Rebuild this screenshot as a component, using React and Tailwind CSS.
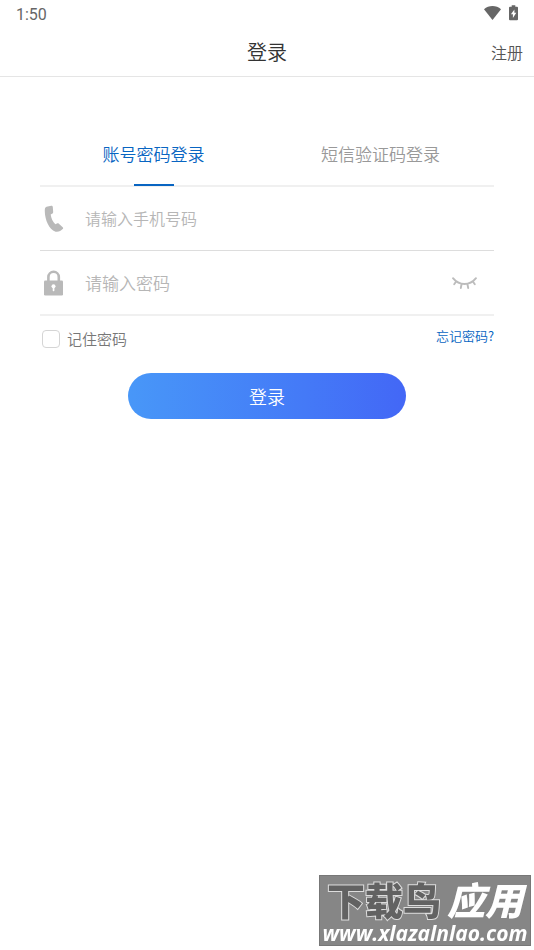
import React, { useState } from "react";

function StatusBar() {
  return (
    <div className="flex h-7 items-center justify-between px-4 text-[#666666]">
      <span className="pt-0.5 font-['Roboto',sans-serif] text-base font-normal">1:50</span>
      <div className="flex items-center gap-2 pb-0.5">
        <svg className="h-4 w-[17px]" viewBox="0 0 17 16" fill="currentColor" aria-hidden="true">
          <path d="M0 4.2C2.4 2.2 5.3 1.1 8.5 1.1s6.1 1.1 8.5 3.1L8.5 15z" />
        </svg>
        <svg className="h-4 w-[9px]" viewBox="0 0 9 16" aria-hidden="true">
          <path fill="currentColor" d="M2.7.3h3.6v1.5H8q1 0 1 1v11.5q0 1-1 1H1q-1 0-1-1V2.8q0-1 1-1h1.7z" />
          <path fill="#fff" d="M5.4 4.4 1.9 9.3h2v3.8l3.4-5.3H5.4z" />
        </svg>
      </div>
    </div>
  );
}

function PhoneIcon() {
  return (
    <svg className="h-7 w-7 shrink-0" viewBox="0 0 28 28" fill="#b9b9b9" aria-hidden="true">
      <path d="M6.500 1.700 11.200.8c.9-.1 1.500.3 1.600 1.200l.4 5.200c0 .8-.4 1.300-1.200 1.600l-1.300.7c.4 4 2.200 7.200 4.700 9.800l1.500-.8c.7-.4 1.400-.4 2 .2l3.800 3.500c.6.600.600 1.300 0 1.900-1.700 1.900-4.300 3.200-7.200 2.600C8.900 24.200 5 14.900 4.800 6.500c0-2.200-.1-4.300 1.700-4.800z" />
    </svg>
  );
}

function LockIcon() {
  return (
    <svg className="h-7 w-7 shrink-0" viewBox="0 0 28 28" aria-hidden="true">
      <path d="M8.400 13V8a5.200 5.200 0 0 1 10.400 0V13" fill="none" stroke="#b9b9b9" strokeWidth="2.600" />
      <rect x="4" y="11.500" width="19" height="15" rx="1.300" fill="#b9b9b9" />
      <circle cx="13.500" cy="17.300" r="2" fill="#fff" />
      <rect x="12.700" y="18" width="1.700" height="4.300" rx=".7" fill="#fff" />
    </svg>
  );
}

function ClosedEyeIcon() {
  return (
    <svg className="h-4 w-7" viewBox="0 0 28 16" fill="none" stroke="#bcbcbc" strokeWidth="1.900" strokeLinecap="round" aria-hidden="true">
      <path d="M3 3.200c6.200 7.800 16.800 7.800 23 0M6.300 6.200 4.200 9.200M11.600 9l-.8 4M17.400 9l.8 4M22.700 6.200l2.100 3" />
    </svg>
  );
}

function Watermark() {
  return (
    <div className="fixed right-[3px] bottom-1 flex h-[71px] w-[212px] flex-col items-center justify-end border border-[#777777] bg-[#868686] whitespace-nowrap text-white">
      <div className="flex items-center gap-1.5 pb-0.5 text-[38px] leading-10 font-black">
        <span className="text-[#626262] [-webkit-text-stroke:2px_#dddddd] [paint-order:stroke_fill]">下载鸟</span>
        <span className="italic">应用</span>
      </div>
      <div className="font-['Open_Sans',sans-serif] text-[21px] leading-6 font-bold italic">www.xlazalnlao.com</div>
    </div>
  );
}

export default function App() {
  const [tab, setTab] = useState("password");
  const [visible, setVisible] = useState(false);
  const tabs = [
    ["password", "账号密码登录"],
    ["sms", "短信验证码登录"],
  ];

  return (
    <div className="min-h-screen bg-white font-['Noto_Sans_CJK_SC',sans-serif] font-[350]">
      <StatusBar />
      <header className="grid h-[49px] grid-cols-[1fr_auto_1fr] items-center border-b border-[#e5e5e5] px-[11px]">
        <h1 className="col-start-2 text-xl leading-7 text-[#333333]">登录</h1>
        <a href="#register" className="justify-self-end text-base text-[#555555]">注册</a>
      </header>

      <main className="px-10 pt-[46px]">
        <div role="tablist" className="grid grid-cols-2 border-b-2 border-[#f0f0f0]">
          {tabs.map(([id, label]) => (
            <button
              key={id}
              type="button"
              role="tab"
              aria-selected={tab === id}
              onClick={() => setTab(id)}
              className={
                "relative flex h-[62px] items-center justify-center text-[17px] " +
                (tab === id ? "text-[#0865c2]" : "text-[#999999]")
              }
            >
              {label}
              {tab === id && <span className="absolute -bottom-px left-1/2 h-0.5 w-10 -translate-x-1/2 bg-[#0865c2]" />}
            </button>
          ))}
        </div>

        <form onSubmit={(e) => e.preventDefault()}>
          <div className="flex h-16 items-center gap-[17px] border-b border-[#dddddd]">
            <PhoneIcon />
            <input
              type="tel"
              aria-label="手机号码"
              placeholder="请输入手机号码"
              className="min-w-0 flex-1 pb-0.5 text-base outline-none placeholder:text-[#b6b6b6]"
            />
          </div>
          <div className="flex h-[65px] items-center gap-[17px] border-b-2 border-[#f0f0f0]">
            <LockIcon />
            <input
              type={visible ? "text" : "password"}
              aria-label="密码"
              placeholder="请输入密码"
              className="min-w-0 flex-1 text-[17px] outline-none placeholder:text-[#b6b6b6]"
            />
            <button type="button" aria-label="显示密码" onClick={() => setVisible(!visible)} className="mr-4">
              <ClosedEyeIcon />
            </button>
          </div>
          <div className="flex items-start justify-between pt-2.5">
            <label className="flex items-center gap-[7px] pt-px pl-0.5 text-[15px] leading-6 text-[#777777]">
              <input
                type="checkbox"
                className="size-[18px] appearance-none rounded border border-[#d5d5d5] checked:bg-[#0865c2]"
              />
              记住密码
            </label>
            <a href="#forgot" className="text-[13px] leading-5 text-[#0865c2]">忘记密码?</a>
          </div>
          <button
            type="submit"
            className="mx-auto mt-[22px] flex h-[46px] w-[278px] items-center justify-center rounded-full bg-linear-to-r from-[#4897f8] to-[#4367f6] text-lg text-white"
          >
            登录
          </button>
        </form>
      </main>
      <Watermark />
    </div>
  );
}
